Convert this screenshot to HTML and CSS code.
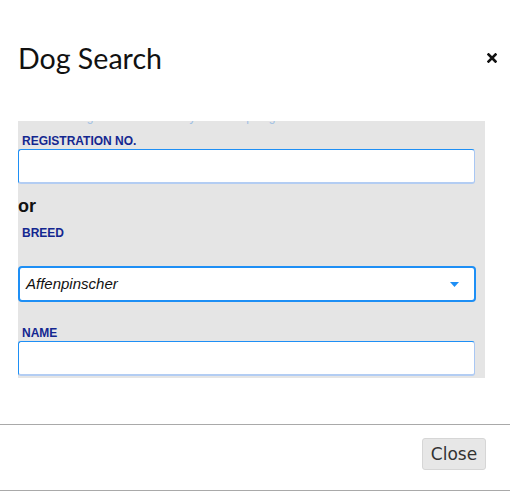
FILE: index.html
```html
<!DOCTYPE html>
<html>
<head>
<meta charset="utf-8">
<link rel="stylesheet" href="styles.css">
</head>
<body>
<div class="modal">
  <div class="header">
    <h1 class="title">Dog Search</h1>
    <span class="close-x" aria-label="Close">
      <svg width="10" height="10" viewBox="0 0 10 10"><path d="M1.5 1.5 L8.5 8.5 M8.5 1.5 L1.5 8.5" stroke="#111" stroke-width="2.6" stroke-linecap="square"/></svg>
    </span>
  </div>
  <div class="panel">
    <div class="clip"><span class="clip-text">Search a dog in our database by numb or pedigree</span></div>
    <label class="lbl lbl-first">REGISTRATION NO.</label>
    <div class="input"></div>
    <div class="or">or</div>
    <label class="lbl lbl-breed">BREED</label>
    <div class="select">
      <span class="select-text">Affenpinscher</span>
      <svg class="caret" width="9" height="5" viewBox="0 0 9 5"><path d="M0 0 H9 L4.5 5 Z" fill="#1e8ff5"/></svg>
    </div>
    <label class="lbl lbl-name">NAME</label>
    <div class="input"></div>
  </div>
  <div class="footer">
    <button class="btn">Close</button>
  </div>
</div>
</body>
</html>
```

FILE: styles.css
```css
html, body {
  margin: 0;
  padding: 0;
  background: #fff;
}
.modal {
  width: 510px;
  height: 491px;
}
.header {
  display: flex;
  justify-content: space-between;
  align-items: flex-start;
  padding: 41px 13px 0 18px;
}
.title {
  margin: 0;
  font-family: Lato, "Open Sans", sans-serif;
  font-weight: 400;
  font-size: 28.6px;
  line-height: 34px;
  color: #111;
}
.close-x {
  display: block;
  margin-top: 12px;
  width: 10px;
  height: 10px;
}
.close-x svg {
  display: block;
}
.panel {
  margin: 46px 0 0 18px;
  width: 467px;
  background: #e5e5e5;
  padding-bottom: 2px;
  font-family: "Liberation Sans", Arial, sans-serif;
}
.clip {
  height: 3px;
  overflow: hidden;
  padding-left: 4px;
}
.clip-text {
  display: block;
  margin-top: -11px;
  font-size: 12px;
  line-height: 14px;
  color: #9fc0e4;
  white-space: nowrap;
}
.lbl {
  display: block;
  padding-left: 4px;
  font-size: 12px;
  line-height: 14px;
  font-weight: 700;
  color: #142790;
}
.lbl-first {
  margin-top: 10px;
  margin-bottom: 1px;
}
.lbl-breed {
  margin-top: 10px;
}
.lbl-name {
  margin-top: 24px;
  margin-bottom: 1px;
}
.input {
  box-sizing: border-box;
  width: 457px;
  height: 35px;
  background: #fff;
  border-style: solid;
  border-width: 1px 1px 2px 1px;
  border-color: #1e8ff5 #a9c7f3 #b3cdf3 #1e8ff5;
  border-radius: 3px;
}
.or {
  margin-top: 12px;
  font-size: 18px;
  line-height: 20px;
  font-weight: 700;
  color: #111;
}
.select {
  box-sizing: border-box;
  margin-top: 26px;
  width: 458px;
  height: 36px;
  background: #fff;
  border: 2px solid #1e8ff5;
  border-radius: 4px;
  display: flex;
  align-items: center;
  justify-content: space-between;
  padding: 0 15px 0 6px;
}
.select-text {
  font-style: italic;
  font-size: 15px;
  line-height: 18px;
  color: #111;
}
.caret {
  display: block;
  margin-top: 1px;
}
.footer {
  margin-top: 46px;
  border-top: 1px solid #a9a9a9;
  border-bottom: 1px solid #a9a9a9;
  display: flex;
  justify-content: flex-end;
  padding: 13px 24px 20px 0;
}
.btn {
  box-sizing: border-box;
  width: 64px;
  height: 32px;
  margin: 0;
  padding: 0;
  background: #e7e7e7;
  border: 1px solid #d6d6d6;
  border-radius: 3px;
  font-family: "DejaVu Sans", Verdana, sans-serif;
  font-size: 17px;
  color: #333;
}
```
